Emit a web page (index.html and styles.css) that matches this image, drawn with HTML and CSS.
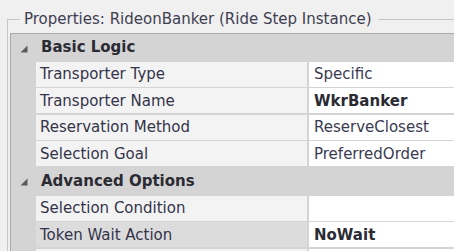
FILE: index.html
```html
<!DOCTYPE html>
<html>
<head>
<meta charset="utf-8">
<link rel="stylesheet" href="styles.css">
</head>
<body>
<fieldset class="props">
  <legend class="props-title">Properties: RideonBanker (Ride Step Instance)</legend>
  <div class="grid">
    <div class="cat">
      <span class="toggle"><svg width="8" height="8" viewBox="0 0 8 8"><path d="M7.5 0.5 V7.5 H0.5 Z" fill="#5a5a5a"/></svg></span>
      <span class="cat-label">Basic Logic</span>
    </div>
    <div class="name">Transporter Type</div><div class="val">Specific</div>
    <div class="name">Transporter Name</div><div class="val bold">WkrBanker</div>
    <div class="name">Reservation Method</div><div class="val">ReserveClosest</div>
    <div class="name">Selection Goal</div><div class="val">PreferredOrder</div>
    <div class="cat">
      <span class="toggle"><svg width="8" height="8" viewBox="0 0 8 8"><path d="M7.5 0.5 V7.5 H0.5 Z" fill="#5a5a5a"/></svg></span>
      <span class="cat-label">Advanced Options</span>
    </div>
    <div class="name">Selection Condition</div><div class="val"></div>
    <div class="name selected">Token Wait Action</div><div class="val bold">NoWait</div>
    <div class="name"></div><div class="val"></div>
  </div>
</fieldset>
</body>
</html>
```

FILE: styles.css
```css
html, body {
  margin: 0;
  padding: 0;
  overflow: hidden;
  background: #f0f0f0;
  font-family: "DejaVu Sans", sans-serif;
  font-size: 15px;
}

.props {
  margin: 11px 0 0 7px;
  padding: 5px 0 0 2px;
  border: 1px solid #c6c6c6;
  border-right: 0;
  border-bottom: 0;
  min-width: 0;
}

.props-title {
  margin-left: 10px;
  padding: 0 6px 0 4px;
  line-height: 17px;
  color: #3e3e52;
}

.grid {
  display: grid;
  grid-template-columns: 25px 271px 1fr;
  row-gap: 1.6px;
  background: #d4d4d4;
  border-top: 1px solid #a9a9a9;
  border-left: 1px solid #a9a9a9;
}

.cat {
  grid-column: 1 / -1;
  height: 26px;
  display: flex;
  align-items: center;
}

.toggle {
  width: 25px;
  box-sizing: border-box;
  padding-left: 9px;
  padding-top: 3px;
  display: flex;
  align-items: center;
}

.cat-label {
  padding-left: 5px;
  font-weight: bold;
  color: #2b2b33;
}

.name {
  grid-column: 2;
  height: 25px;
  background: #f3f3f3;
  padding-left: 4px;
  display: flex;
  align-items: center;
  color: #33334a;
  white-space: nowrap;
}

.name.selected {
  background: #dcdcdc;
}

.val {
  height: 25px;
  margin-left: 2px;
  background: #ffffff;
  padding-left: 5px;
  display: flex;
  align-items: center;
  color: #3a3a52;
  white-space: nowrap;
}

.bold {
  font-weight: bold;
  color: #2b2b33;
}
```
